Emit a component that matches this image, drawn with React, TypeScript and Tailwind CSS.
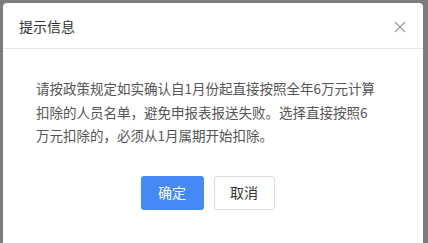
import React from "react";

export default function App() {
  return (
    <div
      className="w-[428px] h-[243px] bg-[#7d7d7d] pt-[3px] pl-[3px] pr-[5px] overflow-hidden"
      style={{ fontFamily: '"Noto Sans CJK SC", "Noto Sans", sans-serif' }}
    >
      <div className="h-[260px] bg-white rounded-t-[4px] flex flex-col">
        <div className="h-[46px] border-b border-[#e6e6e6] flex items-center justify-between pl-[16px] pr-[16px]">
          <span className="text-[14px] text-[#333333] leading-none">提示信息</span>
          <svg width="12" height="12" viewBox="0 0 12 12" className="mt-[3px] mr-[1px]">
            <path d="M1 1 L11 11 M11 1 L1 11" stroke="#9a9a9a" strokeWidth="1.1" fill="none" />
          </svg>
        </div>
        <div className="pt-[28px] pl-[33px] pr-[20px]">
          <p className="text-[13.5px] leading-[23.5px] text-[#555555] whitespace-nowrap">
            请按政策规定如实确认自1月份起直接按照全年6万元计算
            <br />
            扣除的人员名单，避免申报表报送失败。选择直接按照6
            <br />
            万元扣除的，必须从1月属期开始扣除。
          </p>
        </div>
        <div className="flex justify-center gap-[10px] pt-[28px] pr-[11px]">
          <button className="w-[63px] h-[34px] rounded-[3px] bg-[#4589f5] text-white text-[14px]">
            确定
          </button>
          <button className="w-[61px] h-[34px] rounded-[3px] bg-white border border-[#dcdcdc] text-[#333333] text-[14px]">
            取消
          </button>
        </div>
      </div>
    </div>
  );
}
